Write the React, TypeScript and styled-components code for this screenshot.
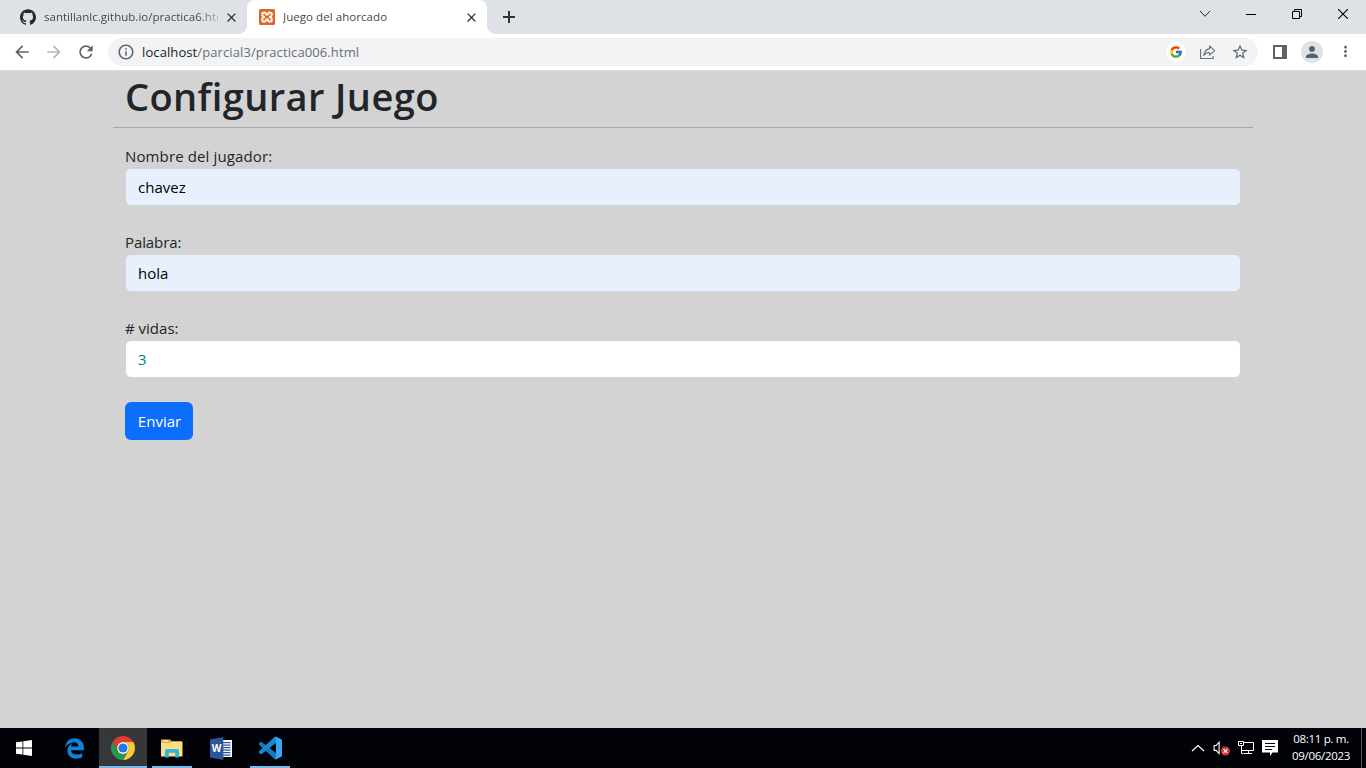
import React from "react";
import styled, { createGlobalStyle } from "styled-components";
import { SiGithub } from "react-icons/si";
import { MdArrowBack, MdArrowForward, MdRefresh, MdInfoOutline, MdStarBorder, MdPerson, MdMoreVert, MdClose } from "react-icons/md";
import { FcGoogle } from "react-icons/fc";
import { FaEdgeLegacy } from "react-icons/fa";

const GlobalStyle = createGlobalStyle`
  * { box-sizing: border-box; }
  body { margin: 0; overflow: hidden; font-family: "Segoe UI", "Open Sans", "Noto Sans", sans-serif; }
  svg { display: block; flex: none; }
`;

const Screen = styled.div`
  width: 1366px;
  height: 768px;
  display: flex;
  flex-direction: column;
  background: #d3d3d3;
`;

const TabStrip = styled.header`
  height: 34px;
  display: flex;
  background: #dee1e6;
`;

const Tab = styled.div<{ $active?: boolean }>`
  position: relative;
  width: ${(p) => (p.$active ? 240 : 247)}px;
  padding: 0 8px 0 ${(p) => (p.$active ? 12 : 20)}px;
  display: flex;
  align-items: center;
  background: ${(p) => (p.$active ? "#fff" : "transparent")};
  border-radius: 8px 8px 0 0;
  color: #45494d;
  ${(p) =>
    p.$active &&
    `&::before, &::after {
      content: "";
      position: absolute;
      bottom: 0;
      width: 8px;
      height: 8px;
    }
    &::before { left: -8px; background: radial-gradient(circle at 0 0, transparent 7.5px, #fff 8px); }
    &::after { right: -8px; background: radial-gradient(circle at 100% 0, transparent 7.5px, #fff 8px); }`}
`;

const TabTitle = styled.span<{ $fade?: boolean; $spacing: number }>`
  width: ${(p) => (p.$fade ? 175 : 176)}px;
  margin-left: 8px;
  margin-right: ${(p) => (p.$fade ? 6 : 5)}px;
  overflow: hidden;
  white-space: nowrap;
  font-size: 11.5px;
  line-height: 18px;
  letter-spacing: ${(p) => p.$spacing}px;
  ${(p) => p.$fade && "mask-image: linear-gradient(to right, #000 154px, transparent 180px);"}
`;

const NewTab = styled.div`
  width: 44px;
  display: grid;
  place-items: center;
`;

const WindowButtons = styled.div`
  margin-left: auto;
  height: 28px;
  display: flex;
`;

const WindowButton = styled.div`
  width: 46px;
  display: grid;
  place-items: center;
`;

const Toolbar = styled.div`
  height: 37px;
  display: flex;
  align-items: center;
  padding: 0 0 1px 12px;
  background: #fff;
  border-bottom: 1px solid #dadada;
  color: #5f6368;
`;

const NavButtons = styled.div`
  flex: none;
  display: flex;
  align-items: center;
  gap: 12px;
  width: 96px;
`;

const Address = styled.div`
  flex: none;
  width: 1150px;
  height: 28px;
  border-radius: 14px;
  background: #f1f3f4;
  display: flex;
  align-items: center;
  padding: 0 9px;
`;

const Url = styled.span`
  margin-left: 7px;
  font-size: 13px;
  line-height: 20px;
  letter-spacing: 0.1px;
  color: #6b6f74;
  b { font-weight: 400; color: #202124; }
`;

const AddressActions = styled.div`
  margin-left: auto;
  display: flex;
  align-items: center;
  gap: 14px;
`;

const GoogleMark = styled.span`
  width: 20px;
  height: 20px;
  margin-right: -1px;
  border-radius: 50%;
  background: #fff;
  display: grid;
  place-items: center;
`;

const BrowserActions = styled.div`
  margin-left: 15px;
  display: flex;
  align-items: center;
  gap: 14px;
`;

const Avatar = styled.span`
  width: 22px;
  height: 22px;
  border-radius: 50%;
  background: #dee1e6;
  color: #56616d;
  display: grid;
  place-items: center;
`;

const Page = styled.main`
  flex: 1;
`;

const Container = styled.div`
  width: 1140px;
  margin: 0 auto;
`;

const Title = styled.h1`
  margin: 0;
  padding: 1px 12px 0;
  height: 56px;
  font-size: 38px;
  line-height: 48px;
  font-weight: 600;
  letter-spacing: 0.4px;
  color: #212529;
`;

const Rule = styled.hr`
  margin: 0 0 16px;
  border: 0;
  height: 1px;
  background: #a6a7a8;
`;

const Form = styled.form`
  padding: 0 12px;
`;

const Field = styled.label`
  display: block;
  margin-bottom: 24px;
`;

const Label = styled.span<{ $spacing: number }>`
  display: block;
  font-size: 15px;
  line-height: 24px;
  letter-spacing: ${(p) => p.$spacing}px;
  color: #212529;
`;

const Input = styled.input<{ $filled?: boolean }>`
  display: block;
  width: 100%;
  height: 38px;
  padding: 0 12px;
  border: 1px solid #ced4da;
  border-radius: 6px;
  outline: 0;
  font-family: inherit;
  font-size: 15px;
  background: ${(p) => (p.$filled ? "#e8f0fe" : "#fff")};
  color: ${(p) => (p.$filled ? "#000" : "#008080")};
`;

const Submit = styled.button`
  width: 68px;
  height: 38px;
  padding: 0 0 0 1px;
  border: 0;
  border-radius: 6px;
  font-family: inherit;
  font-size: 15px;
  background: #0d6efd;
  color: #fff;
`;

const Taskbar = styled.footer`
  height: 40px;
  display: flex;
  background: #020308;
  color: #fff;
`;

const TaskItem = styled.div<{ $focused?: boolean; $open?: boolean; $w?: number }>`
  width: ${(p) => p.$w ?? (p.$open ? 40 : 50)}px;
  height: 40px;
  display: grid;
  place-items: center;
  background: ${(p) => (p.$focused ? "#35373b" : "transparent")};
  box-shadow: ${(p) => (p.$focused || p.$open ? "inset 0 -2px #76b9ed" : "none")};
`;

const TaskGap = styled.div<{ $w: number }>`
  width: ${(p) => p.$w}px;
`;

const Tray = styled.div`
  margin-left: auto;
  display: flex;
  align-items: center;
`;

const TrayIcons = styled.div`
  display: flex;
  align-items: center;
  gap: 8px;
`;

const Clock = styled.div`
  width: 83px;
  padding: 0 0 3px 3px;
  text-align: center;
  font-size: 11.5px;
  line-height: 17px;
  letter-spacing: -0.3px;
`;

const ShowDesktop = styled.div`
  width: 5px;
  height: 40px;
  border-left: 1px solid #55575b;
`;

const XamppIcon = () => (
  <svg width="16" height="16" viewBox="0 0 16 16">
    <rect width="16" height="16" rx="1.5" fill="#d9692a" />
    <path
      fill="none"
      stroke="#fff0e2"
      strokeWidth="2"
      strokeLinejoin="round"
      d="M5.2 8C3.700 7.600 3.200 6.700 3.200 5.600 3.200 4.200 4 3.400 5.200 3.400S7 4.200 7 5.600h2c0-1.400.6-2.200 1.800-2.200s2 .8 2 2.200c0 1.100-.5 2-2 2.400 1.500.4 2 1.300 2 2.400 0 1.400-.8 2.200-2 2.200S9 11.800 9 10.400H7c0 1.400-.6 2.200-1.800 2.200s-2-.8-2-2.200c0-1.100.5-2 2-2.400z"
    />
  </svg>
);

const ShareIcon = () => (
  <svg width="18" height="18" viewBox="0 0 18 18" fill="none" stroke="#6b6f74" strokeWidth="1.1">
    <path d="M1.600 6v9.500h12.600v-2.500" />
    <path d="M10.600 3l5.100 4.600-5.100 4.500V9.500c-2.800 0-4.500.9-5.800 2.900.4-3.600 2.200-6.100 5.800-6.800z" strokeLinejoin="round" />
  </svg>
);

const PanelIcon = () => (
  <svg width="14" height="14" viewBox="0 0 14 14">
    <path fill="#5f6368" fillRule="evenodd" d="M0 0h14v14H0zM2 2v10h7V2z" />
  </svg>
);

const WindowsLogo = () => (
  <svg width="16" height="16" viewBox="0 0 16 16" fill="#fff">
    <path d="M0 2.3l6.500-.9v6.100H0zM7.300 1.300L16 0v7.500H7.300zM0 8.400h6.500v6.200L0 13.700zM7.300 8.400H16V16l-8.700-1.300z" />
  </svg>
);

const ChromeLogo = () => (
  <svg width="24" height="24" viewBox="0 0 24 24">
    <path fill="#e33b2e" d="M1.610 6A12 12 0 0 1 22.390 6H12a6 6 0 0 0-5.200 9z" />
    <path fill="#fcc934" d="M22.390 6A12 12 0 0 1 12 24l5.200-9A6 6 0 0 0 12 6z" />
    <path fill="#269a4b" d="M12 24A12 12 0 0 1 1.610 6l5.200 9a6 6 0 0 0 10.390 0z" />
    <circle cx="12" cy="12" r="5.900" fill="#fff" />
    <circle cx="12" cy="12" r="4.600" fill="#2474e5" />
  </svg>
);

const FolderIcon = () => (
  <svg width="22" height="20" viewBox="0 0 22 20">
    <path fill="#e9b745" d="M0 1.500h9l1.500 1.800H21V17H0z" />
    <path fill="#fff" d="M2 2.400h5v1H2z" />
    <path fill="#fbdf85" d="M0 5h9l1.600-1.200H21.500V18.500H0z" />
    <path fill="#30b5e0" d="M4 19.500v-6.700Q4 11 5.800 11h10.400q1.800 0 1.800 1.800v6.700h-3.700v-4.700H7.700v4.700z" />
  </svg>
);

const WordIcon = () => (
  <svg width="23" height="23" viewBox="0 0 23 23">
    <path fill="#fff" d="M12 3h10v17H12z" />
    <path stroke="#2b579a" strokeWidth="1.200" d="M12 5.700h8.500M12 8.200h8.500M12 10.700h8.500M12 13.200h8.500M12 15.700h8.500M12 18.100h8.500" />
    <path fill="#2b579a" d="M0 2.600L13.300 0v23L0 20.400z" />
    <text x="6.600" y="15.300" textAnchor="middle" fill="#fff" fontFamily="Open Sans" fontWeight="700" fontSize="10">W</text>
  </svg>
);

const CodeIcon = () => (
  <svg width="24" height="24" viewBox="0 0 24 24">
    <path fill="#1479bd" d="M1.100 7.300l1.300-1.200q.6-.5 1.200 0L18 17v6.300q-.9.200-1.500-.4L1.100 8.700q-.7-.7 0-1.400z" />
    <path fill="#1689d0" d="M1.100 16.700l1.300 1.200q.6.500 1.200 0L18 7V.7q-.9-.2-1.500.4L1.100 15.300q-.7.700 0 1.400z" />
    <path fill="#32a9f0" d="M16.500 1.100Q17.100.4 18 .8l4.900 2.300q1.100.5 1.100 1.700v14.400q0 1.200-1.100 1.700L18 23.300q-.9.300-1.500-.4 1.500.6 1.500-1.200V2.300q0-1.800-1.500-1.200z" />
  </svg>
);

const VolumeIcon = () => (
  <svg width="17" height="16" viewBox="0 0 17 16">
    <path fill="none" stroke="#fff" strokeWidth="1.100" d="M1.100 5.500h2l3-3.400v11.500l-3-3.200h-2z" />
    <circle cx="12.400" cy="11" r="4.500" fill="#d9303a" />
    <path stroke="#fff" strokeWidth="1.200" d="M10.500 9.100l3.800 3.800M14.300 9.100l-3.800 3.800" />
  </svg>
);

const NetworkIcon = () => (
  <svg width="16" height="16" viewBox="0 0 16 16" fill="none" stroke="#fff">
    <path d="M6 2.500h9.500v8H3.500V7M10.500 10.500v3M6 13.500h8" />
    <path d="M.5 1.500h5v4h-5zM2 3.500h2M3.500 6v7.500h2" />
  </svg>
);

const NoteIcon = () => (
  <svg width="16" height="16" viewBox="0 0 16 16">
    <path fill="#fff" d="M0 0h16v12.500h-5.500L8 16v-3.500H0z" />
    <path stroke="#020308" d="M3 3.500h10M3 6.500h10M3 9.500h7" />
  </svg>
);

export default function App() {
  return (
    <Screen>
      <GlobalStyle />
      <TabStrip>
        <Tab>
          <SiGithub size={16} color="#24292f" />
          <TabTitle $fade $spacing={0.02}>santillanlc.github.io/practica6.htm</TabTitle>
          <MdClose size={15} color="#303438" />
        </Tab>
        <Tab $active>
          <XamppIcon />
          <TabTitle $spacing={0.06}>Juego del ahorcado</TabTitle>
          <MdClose size={15} color="#303438" />
        </Tab>
        <NewTab>
          <svg width="12" height="12" viewBox="0 0 12 12"><path fill="#303438" d="M5 0h2v5h5v2H7v5H5V7H0V5h5z" /></svg>
        </NewTab>
        <WindowButtons>
          <WindowButton>
            <svg width="12" height="8" viewBox="0 0 12 8" fill="none" stroke="#222"><path d="M1 1l5 5.300L11 1" /></svg>
          </WindowButton>
          <WindowButton>
            <svg width="10" height="2" viewBox="0 0 10 2"><path fill="#000" d="M0 1h10v1H0z" /></svg>
          </WindowButton>
          <WindowButton>
            <svg width="10" height="10" viewBox="0 0 10 10" fill="none" stroke="#000"><path d="M.5 2.500h7v7h-7zM2.500 2.500v-2h7v7h-2" /></svg>
          </WindowButton>
          <WindowButton>
            <svg width="10" height="10" viewBox="0 0 10 10" stroke="#000" strokeWidth="1.100"><path d="M0 0l10 10M10 0L0 10" /></svg>
          </WindowButton>
        </WindowButtons>
      </TabStrip>
      <Toolbar>
        <NavButtons>
          <MdArrowBack size={20} />
          <MdArrowForward size={20} color="#b4b6b9" />
          <MdRefresh size={20} />
        </NavButtons>
        <Address>
          <MdInfoOutline size={18} />
          <Url><b>localhost</b>/parcial3/practica006.html</Url>
          <AddressActions>
            <GoogleMark><FcGoogle size={14} /></GoogleMark>
            <ShareIcon />
            <MdStarBorder size={18} />
          </AddressActions>
        </Address>
        <BrowserActions>
          <PanelIcon />
          <Avatar><MdPerson size={18} /></Avatar>
          <MdMoreVert size={17} />
        </BrowserActions>
      </Toolbar>
      <Page>
        <Container>
          <Title>Configurar Juego</Title>
          <Rule />
          <Form>
            <Field>
              <Label $spacing={0.13}>Nombre del jugador:</Label>
              <Input $filled defaultValue="chavez" />
            </Field>
            <Field>
              <Label $spacing={-0.1}>Palabra:</Label>
              <Input $filled defaultValue="hola" />
            </Field>
            <Field>
              <Label $spacing={0}># vidas:</Label>
              <Input defaultValue="3" />
            </Field>
            <Submit type="button">Enviar</Submit>
          </Form>
        </Container>
      </Page>
      <Taskbar>
        <TaskItem $w={48}><WindowsLogo /></TaskItem>
        <TaskGap $w={1} />
        <TaskItem><FaEdgeLegacy size={21} color="#1182da" /></TaskItem>
        <TaskItem $focused $w={48}><ChromeLogo /></TaskItem>
        <TaskGap $w={5} />
        <TaskItem $open><FolderIcon /></TaskItem>
        <TaskGap $w={4} />
        <TaskItem><WordIcon /></TaskItem>
        <TaskGap $w={4} />
        <TaskItem $open><CodeIcon /></TaskItem>
        <Tray>
          <TrayIcons>
            <svg width="14" height="8" viewBox="0 0 14 8" fill="none" stroke="#fff" strokeWidth="1.200"><path d="M1 7l6-5.500L13 7" /></svg>
            <VolumeIcon />
            <NetworkIcon />
            <NoteIcon />
          </TrayIcons>
          <Clock>08:11 p. m.<br />09/06/2023</Clock>
          <ShowDesktop />
        </Tray>
      </Taskbar>
    </Screen>
  );
}
